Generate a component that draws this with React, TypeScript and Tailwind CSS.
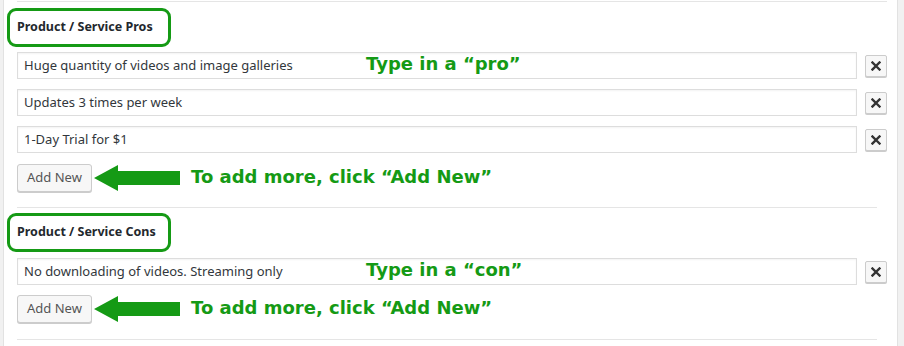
const font = { fontFamily: '"Segoe UI", "Noto Sans", "Open Sans", sans-serif' };

function Arrow() {
  return (
    <svg width="86" height="26" viewBox="0 0 86 26" className="shrink-0">
      <polygon points="0,13 24,0 24,6 86,6 86,20 24,20 24,26" fill="#159a15" />
    </svg>
  );
}

function Callout({ children, className = "" }: { children: React.ReactNode; className?: string }) {
  return (
    <span
      className={"font-bold text-[18px] text-[#159a15] leading-none whitespace-nowrap " + className}
      style={{ fontFamily: '"DejaVu Sans", Verdana, sans-serif' }}
    >
      {children}
    </span>
  );
}

function Row({ value, note }: { value: string; note?: string }) {
  return (
    <div className="flex items-center gap-[8px]">
      <div className="relative flex items-center h-[27px] w-[840px] border border-[#dddddd] bg-white px-[6px] text-[13px] text-[#32373c] shadow-[inset_0_1px_2px_rgba(0,0,0,0.05)]">
        {value}
        {note && <Callout className="absolute left-[348px] top-[2px]">{note}</Callout>}
      </div>
      <button className="flex items-center justify-center w-[22px] h-[22px] border border-[#cccccc] bg-[#f7f7f7] rounded-[2px] shadow-[0_1px_0_#cccccc]">
        <svg width="10" height="10" viewBox="0 0 10 10">
          <path d="M1.5 1.5 L8.5 8.5 M8.5 1.5 L1.5 8.5" stroke="#333" strokeWidth="2.4" strokeLinecap="square" />
        </svg>
      </button>
    </div>
  );
}

function AddNew() {
  return (
    <div className="flex items-center gap-[2px]">
      <button className="h-[28px] w-[75px] border border-[#cccccc] bg-[#f7f7f7] rounded-[3px] text-[13px] text-[#555555] shadow-[0_1px_0_#cccccc]">
        Add New
      </button>
      <Arrow />
      <Callout className="ml-[9px] mt-[-2px]">To add more, click “Add New”</Callout>
    </div>
  );
}

function Heading({ title }: { title: string }) {
  return (
    <div className="ml-[-10px] w-[164px] h-[39px] border-[3px] border-[#159a15] rounded-[9px] flex items-center pl-[7px] text-[12.5px] font-bold text-[#23282d]">
      {title}
    </div>
  );
}

export default function App() {
  return (
    <div className="w-[904px] h-[346px] flex bg-white overflow-hidden" style={font}>
      <div className="w-[4px] bg-[#f1f1f1] border-r border-[#e2e2e2]" />
      <div className="flex-1 pl-[13px] pr-[10px]">
        <div className="mt-[1px] h-px bg-[#e5e5e5] w-[870px]" />
        <div className="mt-[6px]">
          <Heading title="Product / Service Pros" />
        </div>
        <div className="mt-[5px] flex flex-col gap-[10px]">
          <Row value="Huge quantity of videos and image galleries" note="Type in a “pro”" />
          <Row value="Updates 3 times per week" />
          <Row value="1-Day Trial for $1" />
        </div>
        <div className="mt-[11px]">
          <AddNew />
        </div>
        <div className="mt-[15px] h-px bg-[#e5e5e5] w-[860px]" />
        <div className="mt-[5px]">
          <Heading title="Product / Service Cons" />
        </div>
        <div className="mt-[6px]">
          <Row value="No downloading of videos. Streaming only" note="Type in a “con”" />
        </div>
        <div className="mt-[10px]">
          <AddNew />
        </div>
        <div className="mt-[16px] h-px bg-[#e5e5e5] w-[860px]" />
      </div>
      <div className="w-[7px] bg-[#f1f1f1] border-l border-[#e2e2e2]" />
    </div>
  );
}
